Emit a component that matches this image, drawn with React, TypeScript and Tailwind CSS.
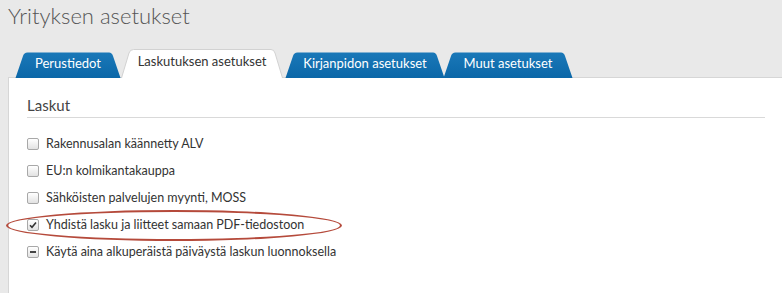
import React from "react";

function TabShape({ w, h, fill, stroke }: { w: number; h: number; fill: string; stroke?: string }) {
  const d = `M0.5 ${h} L8 4 Q9 0.5 12.5 0.5 L${w - 12} 0.5 Q${w - 9} 0.5 ${w - 8} 4 L${w - 0.5} ${h}`;
  return (
    <svg className="absolute inset-0" width={w} height={h} viewBox={`0 0 ${w} ${h}`}>
      <defs>
        <linearGradient id="tabg" x1="0" y1="0" x2="0" y2="1">
          <stop offset="0" stopColor="#1a78b8" />
          <stop offset="1" stopColor="#0b67a8" />
        </linearGradient>
      </defs>
      <path d={d + " Z"} fill={fill} />
      {stroke && <path d={d} fill="none" stroke={stroke} strokeWidth="1" />}
    </svg>
  );
}

function BlueTab({ label, w, className = "" }: { label: string; w: number; className?: string }) {
  return (
    <div className={`relative h-[26px] shrink-0 ${className}`} style={{ width: w }}>
      <TabShape w={w} h={26} fill="url(#tabg)" />
      <div className="relative pt-[1px] text-center text-[13px] leading-[20px] font-normal text-white">{label}</div>
    </div>
  );
}

function Checkbox({ state }: { state: "off" | "on" | "mixed" }) {
  return (
    <span className="relative flex h-[12px] w-[12px] shrink-0 items-center justify-center rounded-[2px] border border-[#a8a8a8] bg-gradient-to-b from-[#ffffff] to-[#e2e2e2]">
      {state === "on" && (
        <svg width="8" height="8" viewBox="0 0 8 8">
          <path d="M1 4.2 L3 6.3 L7 1.5" fill="none" stroke="#333" strokeWidth="1.6" />
        </svg>
      )}
      {state === "mixed" && <span className="h-[2px] w-[6px] bg-[#444]" />}
    </span>
  );
}

const rows: { label: string; state: "off" | "on" | "mixed" }[] = [
  { label: "Rakennusalan käännetty ALV", state: "off" },
  { label: "EU:n kolmikantakauppa", state: "off" },
  { label: "Sähköisten palvelujen myynti, MOSS", state: "off" },
  { label: "Yhdistä lasku ja liitteet samaan PDF-tiedostoon", state: "on" },
  { label: "Käytä aina alkuperäistä päiväystä laskun luonnoksella", state: "mixed" },
];

export default function App() {
  return (
    <div className="h-[293px] w-[782px] overflow-hidden bg-[#e9e9e9] font-['Lato',sans-serif]">
      <div className="pl-[8px] text-[22px] font-light leading-[32px] text-[#555]">Yrityksen asetukset</div>
      <div className="relative z-10 mb-[-1px] mt-[17px] flex h-[29px] items-end pl-[15px]">
        <BlueTab label="Perustiedot" w={106} />
        <div className="relative h-[29px] w-[162px] shrink-0">
          <TabShape w={162} h={29} fill="#ffffff" stroke="#d2d2d2" />
          <div className="relative pt-[2px] text-center text-[13px] leading-[20px] text-[#333]">Laskutuksen asetukset</div>
        </div>
        <BlueTab label="Kirjanpidon asetukset" w={160} className="ml-[2px]" />
        <BlueTab label="Muut asetukset" w={130} className="ml-[-2px]" />
      </div>
      <div className="relative ml-[8px] h-[216px] border-l border-t border-[#d6d6d6] bg-white pl-[18px] pr-[17px] pt-[17px]">
        <div className="border-b border-[#d9d9d9] pb-[2px] text-[15px] leading-[20px] text-[#444]">Laskut</div>
        <div className="mt-[16px] flex flex-col gap-[7px]">
          {rows.map((r) => (
            <div key={r.label} className="flex h-[20px] items-center gap-[7px] text-[12.5px] leading-[20px] text-[#333]">
              <Checkbox state={r.state} />
              <span>{r.label}</span>
            </div>
          ))}
        </div>
        <div className="absolute left-[-3px] top-[132px] h-[31px] w-[336px] rounded-[50%] border-2 border-[#b54a3b]" />
      </div>
    </div>
  );
}
